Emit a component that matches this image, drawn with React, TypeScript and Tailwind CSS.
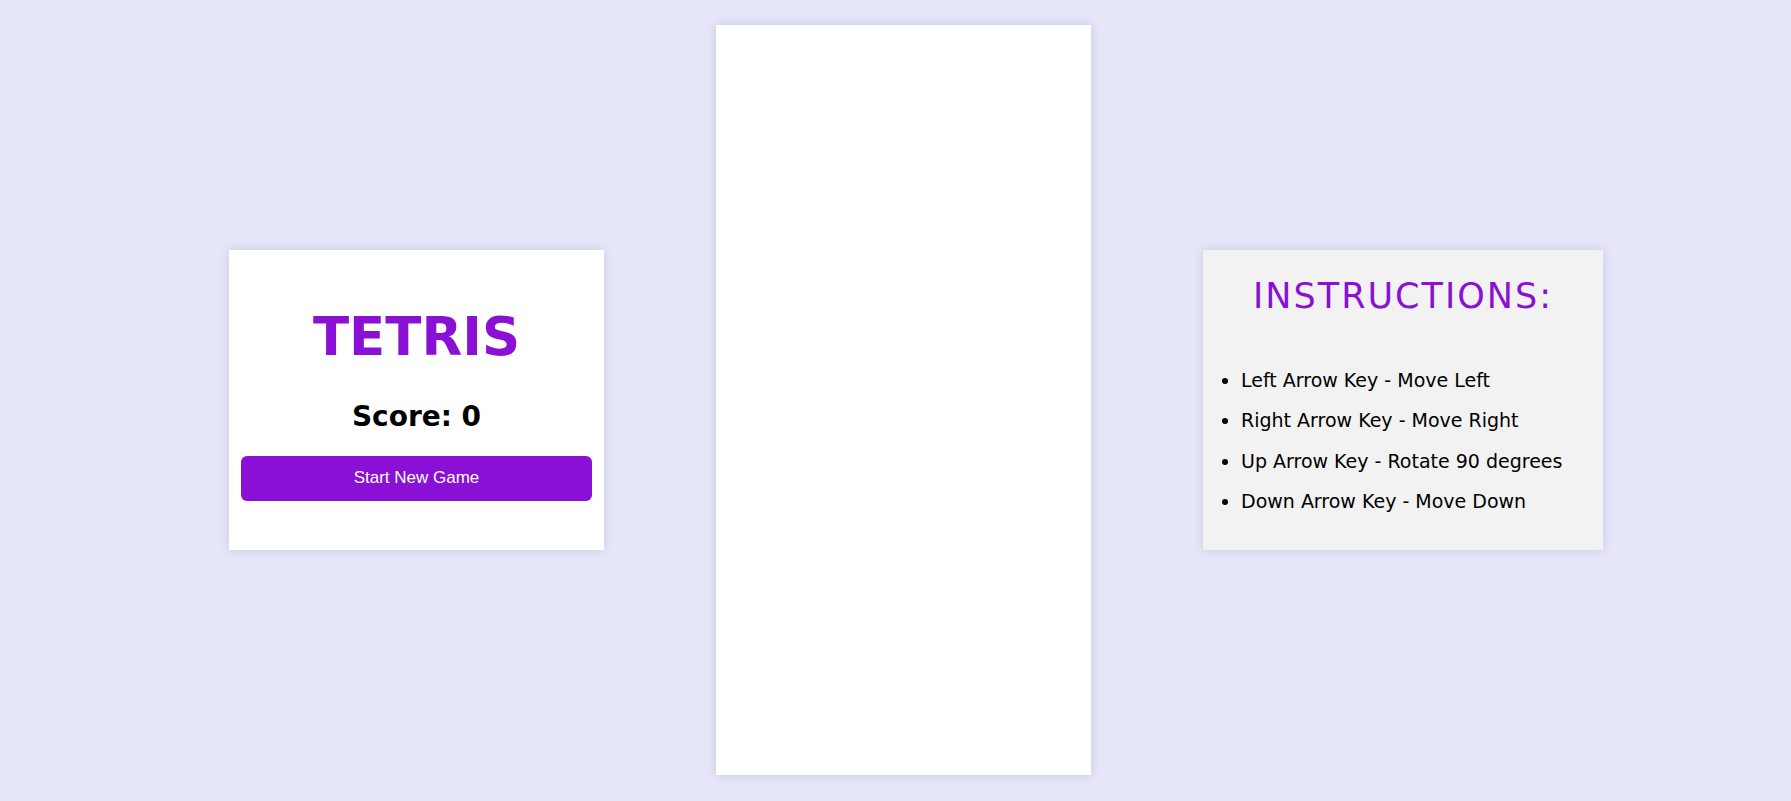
import React from 'react';

const comic = "font-['Comic_Sans_MS','DejaVu_Sans',sans-serif]";

const instrucciones = [
  'Left Arrow Key - Move Left',
  'Right Arrow Key - Move Right',
  'Up Arrow Key - Rotate 90 degrees',
  'Down Arrow Key - Move Down',
];

export default function App() {
  return (
    <div className="h-[801px] overflow-hidden w-full bg-[#e6e6fa] flex items-center pl-[229px] pb-[2px] gap-[112px]">
      {/* Marcador */}
      <div className="w-[375px] h-[300px] bg-white shadow-[0_0_10px_rgba(0,0,0,0.12)] flex flex-col items-center px-[12px] pt-[57px]">
        <h1 className={`${comic} text-[53px] leading-[60px] font-bold text-[#8a10d6]`}>TETRIS</h1>
        <p className={`${comic} text-[28px] leading-[36px] font-bold text-black mt-[32px]`}>Score: 0</p>
        <button className="mt-[21px] w-full h-[45px] rounded-[6px] bg-[#8a10d6] text-white text-[17px] font-['Liberation_Sans',Arial,sans-serif]">
          Start New Game
        </button>
      </div>

      {/* Tablero */}
      <div className="w-[375px] h-[750px] bg-white shadow-[0_0_10px_rgba(0,0,0,0.14)]" />

      {/* Instrucciones */}
      <div className={`${comic} w-[400px] h-[300px] bg-[#f2f2f2] shadow-[0_0_10px_rgba(0,0,0,0.12)] pt-[24px]`}>
        <h2 className="text-center text-[35px] leading-[44px] tracking-[2px] text-[#8a10d6]">INSTRUCTIONS:</h2>
        <ul className="list-disc pl-[38px] mt-[42px] text-[19px] text-black">
          {instrucciones.map((t) => (
            <li key={t} className="h-[40.5px] leading-[40.5px]">{t}</li>
          ))}
        </ul>
      </div>
    </div>
  );
}
